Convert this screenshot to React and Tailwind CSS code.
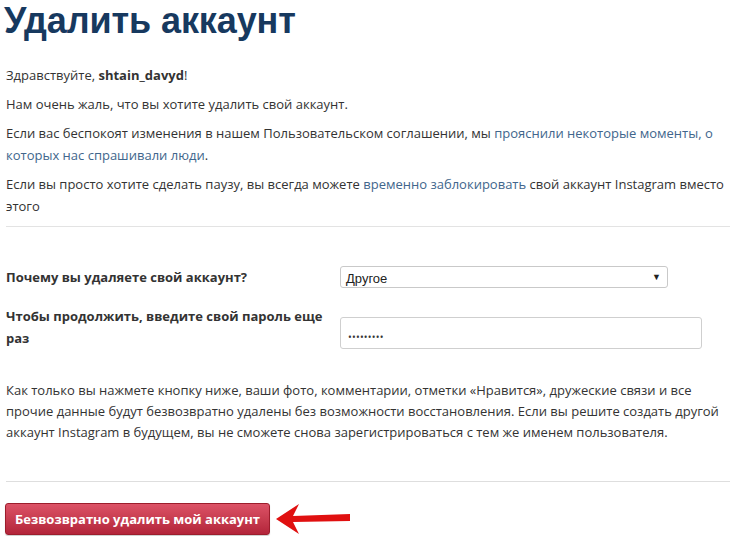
export default function App() {
    return (
        <div className="w-[730px] h-[536px] overflow-hidden bg-white text-[#333] text-[13px] leading-[22px]" style={{ fontFamily: '"Open Sans", sans-serif' }}>
            <h1 className="pl-[4px] pt-[0px] text-[36px] leading-[41px] font-bold text-[#17395f] tracking-[-0.1px]" style={{ fontFamily: '"Liberation Sans", Arial, sans-serif' }}>
                Удалить аккаунт
            </h1>

            <div className="pl-[6px] pt-[23px]">
                <p>Здравствуйте, <b className="font-bold">shtain_davyd</b>!</p>
                <p className="mt-[7px]">Нам очень жаль, что вы хотите удалить свой аккаунт.</p>
                <p className="mt-[7px]">
                    Если вас беспокоят изменения в нашем Пользовательском соглашении, мы{' '}
                    <a className="text-[#41668c]">прояснили некоторые моменты, о которых нас спрашивали люди</a>.
                </p>
                <p className="mt-[7px]">
                    Если вы просто хотите сделать паузу, вы всегда можете{' '}
                    <a className="text-[#41668c]">временно заблокировать</a> свой аккаунт Instagram вместо этого
                </p>
            </div>

            <hr className="ml-[6px] mt-[9px] border-t border-[#e3e3e3]" />

            {/* form */}
            <div className="pl-[6px] pt-[39px]">
                <div className="flex items-center">
                    <label className="w-[334px] font-bold">Почему вы удаляете свой аккаунт?</label>
                    <div className="relative w-[328px] h-[22px] border border-[#c9c9c9] rounded-[3px] bg-white" style={{ fontFamily: '"Liberation Sans", Arial, sans-serif' }}>
                        <span className="absolute left-[5px] top-[3px] text-[13px] leading-[18px] text-[#222]">Другое</span>
                        <span className="absolute right-[6px] top-[1px] text-[9px] leading-[18px] text-[#222]">▼</span>
                    </div>
                </div>

                <div className="flex items-start mt-[17px]">
                    <label className="w-[334px] pr-[10px] font-bold">Чтобы продолжить, введите свой пароль еще раз</label>
                    <div className="w-[362px] h-[32px] mt-[12px] -mb-[4px] border border-[#cfcfcf] rounded-[3px] bg-white flex items-center pl-[7px]">
                        <span className="text-[#333] text-[10px] tracking-[0.2px] leading-none mt-[7px]">•••••••••</span>
                    </div>
                </div>

                <p className="mt-[31px] pr-[8px] leading-[21px]">
                    Как только вы нажмете кнопку ниже, ваши фото, комментарии, отметки «Нравится», дружеские связи и все прочие данные будут безвозвратно удалены без возможности восстановления. Если вы решите создать другой аккаунт Instagram в будущем, вы не сможете снова зарегистрироваться с тем же именем пользователя.
                </p>
            </div>

            <hr className="ml-[6px] mt-[38px] border-t border-[#dedede]" />

            <div className="flex items-center pl-[5px] pt-[20px]">
                <button className="h-[32px] px-[9px] rounded-[3px] border border-[#9c1d2c] bg-gradient-to-b from-[#dc5266] to-[#b3243a] text-white font-bold text-[13px] leading-none shadow-[0_1px_1px_rgba(0,0,0,0.2)]">
                    Безвозвратно удалить мой аккаунт
                </button>
                <svg width="78" height="34" viewBox="0 0 78 34" className="ml-[4px]">
                    <path d="M2 17 L25 2 L19 14 L76 12 L76 19 L19 20 L25 32 Z" fill="#e01010" />
                </svg>
            </div>
        </div>
    );
}
